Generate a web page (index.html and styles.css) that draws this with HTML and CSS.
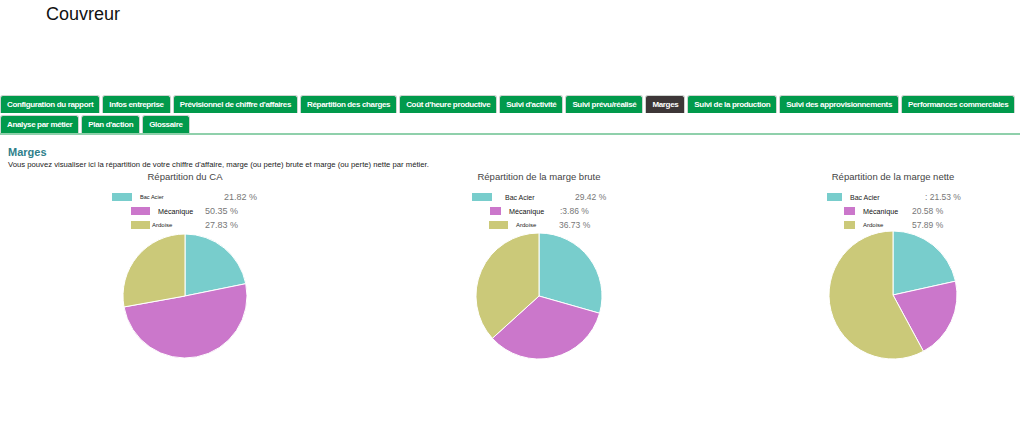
FILE: index.html
```html
<!DOCTYPE html>
<html lang="fr">
<head>
  <meta charset="UTF-8" />
  <meta name="viewport" content="width=device-width, initial-scale=1" />
  <title>Marges — Couvreur</title>
  <link rel="stylesheet" href="styles.css">
</head>
<body>

  <header class="site-head">
    <h1>Couvreur</h1>
  </header>

  <!-- Onglets du rapport -->
  <nav class="tabs">
    <a class="tab" href="#">Configuration du rapport</a>
    <a class="tab" href="#">Infos entreprise</a>
    <a class="tab" href="#">Prévisionnel de chiffre d'affaires</a>
    <a class="tab" href="#">Répartition des charges</a>
    <a class="tab" href="#">Coût d'heure productive</a>
    <a class="tab" href="#">Suivi d'activité</a>
    <a class="tab" href="#">Suivi prévu/réalisé</a>
    <a class="tab active" href="#">Marges</a>
    <a class="tab" href="#">Suivi de la production</a>
    <a class="tab" href="#">Suivi des approvisionnements</a>
    <a class="tab" href="#">Performances commerciales</a>
    <span class="tab-break"></span>
    <a class="tab" href="#">Analyse par métier</a>
    <a class="tab" href="#">Plan d'action</a>
    <a class="tab" href="#">Glossaire</a>
  </nav>

  <main class="content">
    <h2 class="section-title">Marges</h2>
    <p class="intro">Vous pouvez visualiser ici la répartition de votre chiffre d'affaire, marge (ou perte) brute et marge (ou perte) nette par métier.</p>

    <div class="charts">
      <section class="chart chart-ca">
        <h3>Répartition du CA</h3>
        <ul class="legend">
          <li class="row-1"><span class="swatch acier"></span><span class="name">Bac Acier</span><span class="value">21.82 %</span></li>
          <li class="row-2"><span class="swatch meca"></span><span class="name">Mécanique</span><span class="value">50.35 %</span></li>
          <li class="row-3"><span class="swatch ardoise"></span><span class="name">Ardoise</span><span class="value">27.83 %</span></li>
        </ul>
        <svg class="pie" data-values="21.82,50.35,27.83"></svg>
      </section>

      <section class="chart chart-brute">
        <h3>Répartition de la marge brute</h3>
        <ul class="legend">
          <li class="row-1"><span class="swatch acier"></span><span class="name">Bac Acier</span><span class="value">29.42 %</span></li>
          <li class="row-2"><span class="swatch meca"></span><span class="name">Mécanique</span><span class="value">:3.86 %</span></li>
          <li class="row-3"><span class="swatch ardoise"></span><span class="name">Ardoise</span><span class="value">36.73 %</span></li>
        </ul>
        <svg class="pie" data-values="29.42,33.86,36.73"></svg>
      </section>

      <section class="chart chart-nette">
        <h3>Répartition de la marge nette</h3>
        <ul class="legend">
          <li class="row-1"><span class="swatch acier"></span><span class="name">Bac Acier</span><span class="value">: 21.53 %</span></li>
          <li class="row-2"><span class="swatch meca"></span><span class="name">Mécanique</span><span class="value">20.58 %</span></li>
          <li class="row-3"><span class="swatch ardoise"></span><span class="name">Ardoise</span><span class="value">57.89 %</span></li>
        </ul>
        <svg class="pie" data-values="21.53,20.58,57.89"></svg>
      </section>
    </div>
  </main>

  <script>
    // Camemberts : Bac Acier, Mécanique, Ardoise, en partant du haut
    const colors = ['#78cdcc', '#cb77cb', '#cbc979'];
    const NS = 'http://www.w3.org/2000/svg';

    document.querySelectorAll('.pie').forEach((svg) => {
      const values = svg.dataset.values.split(',').map(Number);
      const total = values.reduce((a, b) => a + b, 0);
      const r = 50;
      let start = -Math.PI / 2;

      svg.setAttribute('viewBox', '-50 -50 100 100');

      values.forEach((v, i) => {
        const end = start + (v / total) * Math.PI * 2;
        const large = end - start > Math.PI ? 1 : 0;
        const x1 = r * Math.cos(start), y1 = r * Math.sin(start);
        const x2 = r * Math.cos(end), y2 = r * Math.sin(end);

        const path = document.createElementNS(NS, 'path');
        path.setAttribute('d', `M0 0 L${x1} ${y1} A${r} ${r} 0 ${large} 1 ${x2} ${y2} Z`);
        path.setAttribute('fill', colors[i]);
        svg.appendChild(path);
        start = end;
      });
    });
  </script>

</body>
</html>
```

FILE: styles.css
```css
body {
  margin: 0;
  background-color: #fff;
  color: #333;
  font-family: "Liberation Sans", Arial, sans-serif;
  overflow: hidden;
}

.site-head h1 {
  margin: 0;
  padding: 3px 0 0 46px;
  font-size: 18px;
  font-weight: 400;
  line-height: 22px;
  color: #111;
}

/* Onglets */
.tabs {
  display: flex;
  flex-wrap: wrap;
  row-gap: 1px;
  width: 1020px;
  margin-top: 70px;
  border-bottom: 2px solid #8fd0ab;
}

.tab {
  height: 17px;
  line-height: 17px;
  padding: 0 6px;
  margin-right: 2px;
  background-color: #019a4c;
  border: 1px solid #cfd4d0;
  border-bottom: none;
  border-radius: 3px 3px 0 0;
  color: #fff;
  text-decoration: none;
  font-family: "Liberation Sans", Arial, sans-serif;
  font-weight: 700;
  font-size: 8px;
  letter-spacing: -0.35px;
  white-space: nowrap;
}

.tab.active {
  background-color: #3d3637;
}

.tab-break {
  flex-basis: 100%;
}

/* Contenu */
.content {
  padding: 0 8px;
}

.section-title {
  margin: 11px 0 0;
  font-size: 11px;
  line-height: 13px;
  font-weight: 700;
  color: #2f7f8b;
}

.intro {
  margin: 1px 0 0;
  font-size: 7.7px;
  line-height: 9px;
  color: #222;
}

.charts {
  display: grid;
  grid-template-columns: repeat(3, 354px);
}

.chart h3 {
  margin: 2px 0 0;
  text-align: center;
  font-size: 9.5px;
  line-height: 12px;
  font-weight: 400;
  color: #444;
}

/* Légendes */
.legend {
  list-style: none;
  margin: 7px 0 0;
  padding: 0;
}

.legend li {
  display: flex;
  align-items: center;
  height: 14px;
  padding-left: var(--indent);
}

.swatch {
  width: var(--sw);
  height: 8px;
  margin-right: var(--gap);
  flex-shrink: 0;
}

.swatch.acier { background-color: #78cdcc; }
.swatch.meca { background-color: #cb77cb; }
.swatch.ardoise { background-color: #cbc979; }

.name {
  width: var(--name);
  flex-shrink: 0;
  font-size: 7px;
  color: #222;
}

.row-2 .name { font-size: 7.2px; color: #111; }
.row-3 .name { font-size: 6px; }

.value {
  font-size: 8.5px;
  color: #777;
}

.chart-ca .row-1 { --indent: 104px; --sw: 20px; --gap: 8px; --name: 84px; }
.chart-ca .row-2 { --indent: 123px; --sw: 19px; --gap: 8px; --name: 47px; }
.chart-ca .row-3 { --indent: 123px; --sw: 19px; --gap: 2px; --name: 53px; }
.chart-ca .row-1 .name { font-size: 5.6px; }
.chart-ca .value { font-size: 9px; }

.chart-brute .row-1 { --indent: 110px; --sw: 20px; --gap: 13px; --name: 70px; }
.chart-brute .row-2 { --indent: 128px; --sw: 11px; --gap: 8px; --name: 51px; }
.chart-brute .row-3 { --indent: 127px; --sw: 19px; --gap: 8px; --name: 43px; }

.chart-nette .row-1 { --indent: 111px; --sw: 15px; --gap: 8px; --name: 75px; }
.chart-nette .row-2 { --indent: 128px; --sw: 11px; --gap: 8px; --name: 49px; }
.chart-nette .row-3 { --indent: 128px; --sw: 11px; --gap: 8px; --name: 49px; }

/* Camemberts */
.pie {
  display: block;
  margin: 1px auto 0;
  width: 126px;
  height: 126px;
}

.pie path {
  stroke: #fff;
  stroke-width: 1px;
  vector-effect: non-scaling-stroke;
}

.chart-ca .pie { width: 124px; height: 124px; margin-top: 2px; }
.chart-nette .pie { width: 128px; height: 128px; margin-top: -1px; }
```
